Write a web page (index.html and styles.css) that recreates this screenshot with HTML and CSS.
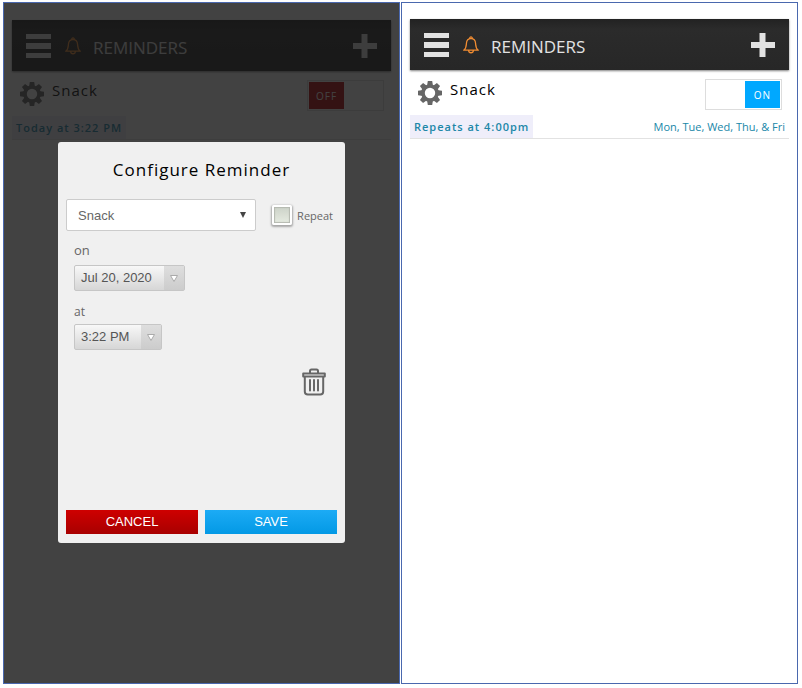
FILE: index.html
```html
<!DOCTYPE html>
<html lang="en">
<head>
<meta charset="utf-8">
<title>Reminders</title>
<link rel="stylesheet" href="styles.css">
</head>
<body>
<svg class="sprite" aria-hidden="true">
  <symbol id="icon-menu" viewBox="0 0 26 26"><path d="M0 1h25v5H0zM0 10h25v6H0zM0 20h25v5H0z" fill="currentColor"/></symbol>
  <symbol id="icon-plus" viewBox="0 0 26 26"><path d="M9.500 1h6v9H25v6h-9.500v9h-6v-9H1v-6h8.500z" fill="currentColor"/></symbol>
  <symbol id="icon-bell" viewBox="0 0 16 18"><path d="M.7 14.2c2.600-1.700 2.500-3.700 2.700-6.700C3.600 4.500 5.400 2.700 8 2.700s4.400 1.800 4.600 4.800c.2 3 .1 5 2.700 6.700zM6.800 2.600c-.5-2.200 2.900-2.200 2.400 0M5.600 14.500c.3 3 4.500 3 4.800 0" fill="none" stroke="currentColor" stroke-width="1.300" stroke-linejoin="round"/></symbol>
  <symbol id="icon-gear" viewBox="0 0 24 24">
    <g fill="currentColor">
      <path d="M9.800 0h4.400l.8 5H9zM9 19h6l-.8 5H9.800z"/>
      <path d="M9.800 0h4.400l.8 5H9zM9 19h6l-.8 5H9.800z" transform="rotate(45 12 12)"/>
      <path d="M9.800 0h4.400l.8 5H9zM9 19h6l-.8 5H9.800z" transform="rotate(90 12 12)"/>
      <path d="M9.800 0h4.400l.8 5H9zM9 19h6l-.8 5H9.800z" transform="rotate(135 12 12)"/>
    </g>
    <circle cx="12" cy="12" r="7" fill="none" stroke="currentColor" stroke-width="3.600"/>
  </symbol>
  <symbol id="icon-trash" viewBox="0 0 24 28"><path d="M1.200 5.500h21.600v3H1.200zM8 5.200V3q0-1.500 1.500-1.500h5Q16 1.500 16 3v2.200M2.800 9v14.500q0 3 3 3h12.400q3 0 3-3V9M8 12v10.500M12 12v10.500M16 12v10.500" fill="none" stroke="currentColor" stroke-width="2" stroke-linejoin="round" stroke-linecap="round"/></symbol>
</svg>

<main class="screens">
  <section class="screen screen-dimmed">
    <header class="bar">
      <button class="icon-button" aria-label="Menu"><svg class="icon-large"><use href="#icon-menu"/></svg></button>
      <svg class="icon-bell"><use href="#icon-bell"/></svg>
      <h1 class="bar-title">REMINDERS</h1>
      <button class="icon-button" aria-label="Add reminder"><svg class="icon-large"><use href="#icon-plus"/></svg></button>
    </header>
    <article class="reminder">
      <div class="reminder-main">
        <button class="icon-button gear" aria-label="Configure"><svg class="icon-gear"><use href="#icon-gear"/></svg></button>
        <h2 class="reminder-name">Snack</h2>
        <label class="toggle"><input type="checkbox" class="toggle-input"><span class="toggle-knob">OFF</span></label>
      </div>
      <div class="reminder-meta"><span class="when">Today at 3:22 PM</span></div>
    </article>

    <div class="overlay">
      <form class="dialog" role="dialog" aria-labelledby="dialog-title">
        <h2 class="dialog-title" id="dialog-title">Configure Reminder</h2>
        <div class="type-row">
          <div class="select-wrap">
            <select class="type-select" aria-label="Reminder type"><option>Snack</option></select>
            <svg class="select-arrow" viewBox="0 0 6 6"><path d="M0 0h6L3 6z" fill="#444"/></svg>
          </div>
          <label class="repeat"><input type="checkbox" class="repeat-box">Repeat</label>
        </div>
        <label class="field-label" for="date">on</label>
        <button class="picker" type="button" id="date"><span class="picker-value">Jul 20, 2020</span><span class="picker-arrow"><svg class="picker-icon" viewBox="0 0 8 7"><path d="M.5.5h7L4 6.500z" fill="#fff" stroke="#aaa"/></svg></span></button>
        <label class="field-label field-label-small" for="time">at</label>
        <button class="picker" type="button" id="time"><span class="picker-value">3:22 PM</span><span class="picker-arrow"><svg class="picker-icon" viewBox="0 0 8 7"><path d="M.5.5h7L4 6.500z" fill="#fff" stroke="#aaa"/></svg></span></button>
        <button class="icon-button trash" type="button" aria-label="Delete reminder"><svg class="icon-trash"><use href="#icon-trash"/></svg></button>
        <div class="actions">
          <button class="action action-cancel" type="button">CANCEL</button>
          <button class="action action-save" type="button">SAVE</button>
        </div>
      </form>
    </div>
  </section>

  <section class="screen">
    <header class="bar">
      <button class="icon-button" aria-label="Menu"><svg class="icon-large"><use href="#icon-menu"/></svg></button>
      <svg class="icon-bell"><use href="#icon-bell"/></svg>
      <h1 class="bar-title">REMINDERS</h1>
      <button class="icon-button" aria-label="Add reminder"><svg class="icon-large"><use href="#icon-plus"/></svg></button>
    </header>
    <article class="reminder">
      <div class="reminder-main">
        <button class="icon-button gear" aria-label="Configure"><svg class="icon-gear"><use href="#icon-gear"/></svg></button>
        <h2 class="reminder-name">Snack</h2>
        <label class="toggle toggle-on"><input type="checkbox" class="toggle-input" checked><span class="toggle-knob">ON</span></label>
      </div>
      <div class="reminder-meta"><span class="when">Repeats at 4:00pm</span><span class="days">Mon, Tue, Wed, Thu, &amp; Fri</span></div>
    </article>
  </section>
</main>
</body>
</html>
```
FILE: styles.css
```css
* { box-sizing: border-box; }

body {
  margin: 0;
  background: #fff;
  font-family: "Open Sans", "Noto Sans", sans-serif;
  color: #000;
}

h1, h2 { margin: 0; font-weight: 400; }

button { font: inherit; cursor: pointer; }

.sprite { display: none; }

.screens {
  display: grid;
  grid-template-columns: 1fr 1fr;
  gap: 1px;
  min-height: 100vh;
  padding: 2px 4px 4px 3px;
}

.screen {
  position: relative;
  border: 1px solid #4a68ae;
  padding: 16px 8px 0;
}

.screen-dimmed { padding-top: 17px; }

.bar {
  display: flex;
  align-items: center;
  height: 51px;
  padding: 0 13px 0 14px;
  background: linear-gradient(#222, #2b2b2b 20%, #272727);
  box-shadow: 0 1px 2px rgba(0, 0, 0, 0.5);
  color: #e2e2e2;
}

.icon-button {
  display: block;
  padding: 0;
  border: 0;
  background: none;
  color: inherit;
}

.icon-button svg { display: block; }

.icon-large { width: 26px; height: 26px; }

.icon-bell {
  width: 16px;
  height: 18px;
  margin: 0 12px 0 13px;
  color: #f08c32;
}

.bar-title {
  flex: 1;
  font-size: 17px;
  line-height: 24px;
  padding-top: 5px;
}

.reminder { border-bottom: 1px solid #e2e2e2; }

.reminder-main {
  display: flex;
  align-items: flex-start;
  height: 45px;
  padding: 9px 7px 0 8px;
}

.gear { padding-top: 2px; color: #666; }

.icon-gear { width: 24px; height: 24px; }

.reminder-name {
  flex: 1;
  padding-left: 8px;
  font-size: 15px;
  line-height: 21px;
  letter-spacing: 1px;
}

.toggle {
  display: flex;
  width: 77px;
  height: 31px;
  padding: 1px;
  border: 1px solid #ddd;
  background: #fff;
}

.toggle-on { justify-content: flex-end; }

.toggle-input { position: absolute; opacity: 0; }

.toggle-knob {
  width: 35px;
  background: #b4020a;
  color: #fff;
  font-size: 10px;
  line-height: 29px;
  letter-spacing: 1px;
  text-align: center;
}

.toggle-on .toggle-knob { background: #00a8ff; }

.reminder-meta {
  display: flex;
  justify-content: space-between;
  font-size: 11px;
  line-height: 23px;
  color: #2087a8;
}

.when {
  padding: 0 4px;
  background: #efeefa;
  font-weight: 600;
  letter-spacing: 1px;
}

.days { padding-right: 4px; }

.overlay {
  position: absolute;
  inset: 0;
  display: flex;
  justify-content: center;
  align-items: flex-start;
  padding: 139px 54px 0;
  background: rgba(22, 22, 22, 0.81);
}

.dialog {
  display: flex;
  flex-direction: column;
  align-items: flex-start;
  width: 100%;
  min-height: 401px;
  padding: 16px 8px 9px;
  border-radius: 3px;
  background: #f0f0f0;
  color: #666;
}

.dialog-title {
  align-self: center;
  font-size: 17px;
  line-height: 24px;
  letter-spacing: 1px;
  color: #000;
}

.type-row {
  display: flex;
  align-items: center;
  gap: 16px;
  width: 100%;
  margin: 17px 0 9px;
}

.select-wrap { position: relative; flex: 1; }

.type-select {
  display: block;
  width: 100%;
  height: 32px;
  padding: 0 11px;
  appearance: none;
  border: 1px solid #ccc;
  border-radius: 2px;
  background: #fff;
  font: 13px "Liberation Sans", Arial, sans-serif;
  color: #666;
}

.select-arrow {
  position: absolute;
  right: 10px;
  top: 13px;
  width: 6px;
  height: 6px;
}

.repeat {
  display: flex;
  align-items: center;
  gap: 5px;
  padding-right: 4px;
  font-size: 11px;
}

.repeat-box {
  width: 20px;
  height: 20px;
  margin: 0;
  appearance: none;
  border: 2px solid #fff;
  border-radius: 2px;
  background: linear-gradient(#ccd2c8, #e6ebe1);
  box-shadow: 0 1px 2px 1px rgba(0, 0, 0, 0.3), inset 0 0 1px 1px #b4b8b0;
}

.field-label {
  padding-left: 8px;
  font-size: 13px;
  line-height: 20px;
}

.field-label-small { margin-top: 11px; font-size: 12px; }

.picker {
  display: flex;
  height: 26px;
  margin: 5px 0 0 8px;
  padding: 0;
  border: 1px solid #c6c6c6;
  border-radius: 2px;
  background: linear-gradient(#f8f8f8, #d6d6d6);
  font: 13px/24px "Liberation Sans", Arial, sans-serif;
  color: #555;
}

.field-label-small + .picker { margin-top: 2px; }

.picker-value { padding: 0 12px 0 6px; }

.picker-arrow {
  display: flex;
  align-items: center;
  justify-content: center;
  width: 20px;
  height: 24px;
  background: linear-gradient(#dedede, #ccc);
}

.picker-icon { width: 8px; height: 7px; }

.trash { align-self: flex-end; margin: 18px 11px 0 0; }

.icon-trash { width: 24px; height: 28px; }

.actions {
  display: grid;
  grid-template-columns: 1fr 1fr;
  gap: 7px;
  width: 100%;
  margin-top: auto;
}

.action {
  height: 24px;
  padding: 0;
  border: 0;
  font: 13px/24px "Liberation Sans", Arial, sans-serif;
  color: #fff;
}

.action-cancel { background: linear-gradient(#ce0000, #a80000); }

.action-save { background: linear-gradient(#1cabf5, #0399e5); }
```
